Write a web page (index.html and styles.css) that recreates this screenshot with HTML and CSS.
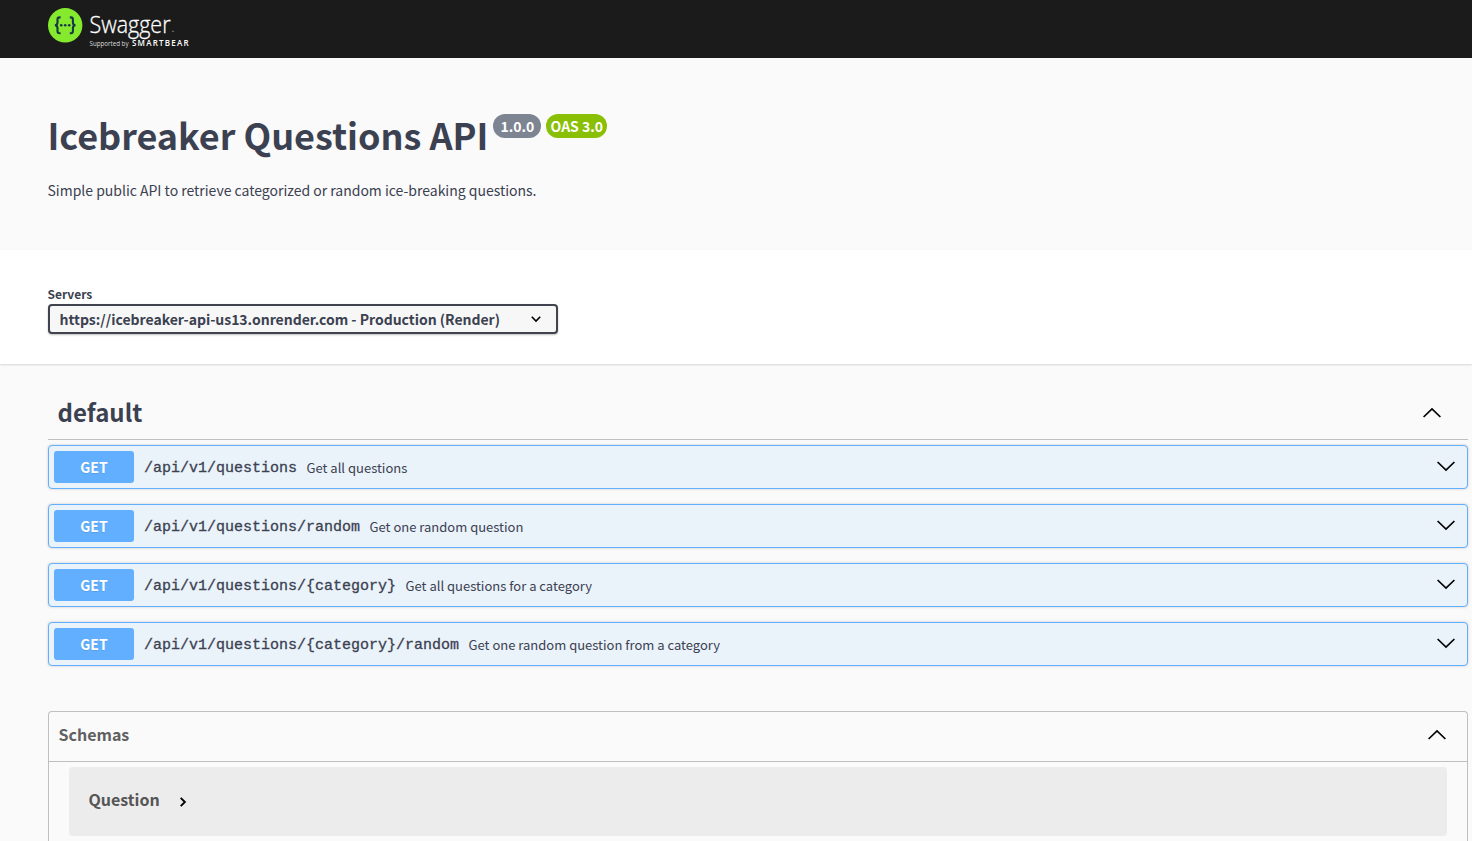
FILE: index.html
```html
<!DOCTYPE html>
<html lang="en">
<head>
<meta charset="utf-8">
<title>Icebreaker Questions API</title>
<link rel="stylesheet" href="styles.css">
</head>
<body>
<header class="topbar">
  <svg class="logo" width="144" height="42" viewBox="0 0 144 42">
    <circle cx="17.2" cy="17.3" r="17.2" fill="#85ea2d"/>
    <g fill="none" stroke="#173647" stroke-width="2.1">
      <path d="M12.6 9.4h-1.1q-2 0-2 2v3.2q0 2.6-2.6 2.7q2.6.1 2.6 2.7v3.2q0 2 2 2h1.1"/>
      <path d="M21.8 9.4h1.1q2 0 2 2v3.2q0 2.6 2.6 2.7q-2.6.1-2.6 2.7v3.2q0 2-2 2h-1.1"/>
    </g>
    <g fill="#173647"><circle cx="13.2" cy="17.3" r="1.3"/><circle cx="17.2" cy="17.3" r="1.3"/><circle cx="21.2" cy="17.3" r="1.3"/></g>
    <text class="logo-name" x="41.5" y="24.5" textLength="81" lengthAdjust="spacingAndGlyphs">Swagger</text>
    <path d="M123.8 23.3h2.4" stroke="#888" stroke-width=".8"/>
    <text class="logo-small" x="41.5" y="38" textLength="39" lengthAdjust="spacingAndGlyphs">Supported by</text>
    <text class="logo-brand" x="84" y="38" textLength="56.5" lengthAdjust="spacing">SMARTBEAR</text>
  </svg>
</header>
<section class="info">
  <h1 class="title">Icebreaker Questions API<span class="badges"><span class="badge version">1.0.0</span><span class="badge oas">OAS 3.0</span></span></h1>
  <p class="description">Simple public API to retrieve categorized or random ice-breaking questions.</p>
</section>
<section class="servers">
  <div class="servers-label">Servers</div>
  <div class="select"><span>https://icebreaker-api-us13.onrender.com - Production (Render)</span>
    <svg width="12" height="8" viewBox="0 0 12 8"><path d="M1.8 1.8L6 6l4.2-4.2" fill="none" stroke="#000" stroke-width="1.6"/></svg>
  </div>
</section>
<main class="content">
  <h2 class="tag"><span>default</span><svg class="arrow" width="20" height="12" viewBox="0 0 20 12"><path d="M1.6 10L10 2l8.4 8"/></svg></h2>
  <div class="operations">
    <div class="op"><span class="method">GET</span><span class="path">/api/v1/questions</span><span class="summary">Get all questions</span><svg class="arrow" width="20" height="12" viewBox="0 0 20 12"><path d="M1.6 2L10 10l8.4-8"/></svg></div>
    <div class="op"><span class="method">GET</span><span class="path">/api/v1/questions/random</span><span class="summary">Get one random question</span><svg class="arrow" width="20" height="12" viewBox="0 0 20 12"><path d="M1.6 2L10 10l8.4-8"/></svg></div>
    <div class="op"><span class="method">GET</span><span class="path">/api/v1/questions/{category}</span><span class="summary">Get all questions for a category</span><svg class="arrow" width="20" height="12" viewBox="0 0 20 12"><path d="M1.6 2L10 10l8.4-8"/></svg></div>
    <div class="op"><span class="method">GET</span><span class="path">/api/v1/questions/{category}/random</span><span class="summary">Get one random question from a category</span><svg class="arrow" width="20" height="12" viewBox="0 0 20 12"><path d="M1.6 2L10 10l8.4-8"/></svg></div>
  </div>
  <section class="models">
    <h3 class="models-head"><span>Schemas</span><svg class="arrow" width="20" height="12" viewBox="0 0 20 12"><path d="M1.6 10L10 2l8.4 8"/></svg></h3>
    <div class="model"><span>Question</span><svg width="8" height="12" viewBox="0 0 8 12"><path d="M1.7 1.8L5.9 6l-4.2 4.2" fill="none" stroke="#000" stroke-width="1.9"/></svg></div>
  </section>
</main>
</body>
</html>
```

FILE: styles.css
```css
* { box-sizing: border-box; }
body {
  margin: 0;
  background: #fafafa;
  color: #3b4151;
  font-family: "Noto Sans CJK KR", "Noto Sans", sans-serif;
}
h1, h2, h3, p { margin: 0; }
svg { flex: none; display: block; }
.topbar { height: 58px; padding: 8px 48px; background: #1b1b1b; }
.logo-name { font: 300 23px "Open Sans", sans-serif; fill: #fff; stroke: #fff; stroke-width: .3; }
.logo-small { font: 400 6.4px "Open Sans", sans-serif; fill: #ddd; }
.logo-brand { font: 600 8px "Open Sans", sans-serif; fill: #fff; }
.info { height: 192px; padding: 50px 47.5px 0; }
.title { display: flex; font-size: 36px; line-height: 52px; font-weight: 700; letter-spacing: -.03px; white-space: nowrap; }
.badges { display: flex; gap: 5px; margin: 6px 0 0 5px; letter-spacing: 0; }
.badge { height: 24px; line-height: 25px; border-radius: 12px; color: #fff; font-size: 14px; text-align: center; }
.version { width: 48px; background: #7d8492; }
.oas { width: 61px; background: #89bf04; }
.description { margin-top: 20px; font-size: 14px; line-height: 20px; letter-spacing: -.01px; }
.servers { height: 114px; padding: 35px 48px 0; background: #fff; box-shadow: 0 1px 2px rgba(0,0,0,.15); }
.servers-label { margin: 0 0 2px -.5px; font-size: 12px; line-height: 17px; font-weight: 700; }
.select {
  display: flex;
  align-items: center;
  justify-content: space-between;
  width: 510px;
  height: 30px;
  padding: 0 14px 0 9.5px;
  border: 2px solid #41444e;
  border-radius: 4px;
  background: #f7f7f7;
  box-shadow: 0 1px 2px rgba(0,0,0,.25);
  font-size: 14px;
  line-height: 26px;
  font-weight: 700;
  letter-spacing: -.015px;
  white-space: nowrap;
}
.content { padding: 22px 4px 0 48px; }
.tag { display: flex; align-items: center; justify-content: space-between; height: 54px; padding: 0 26px 0 9.5px; border-bottom: 1px solid #bebfc3; font-size: 24px; line-height: 36px; }
.tag span { padding-bottom: 2px; }
.arrow path { fill: none; stroke: #000; stroke-width: 1.7; }
.operations { display: grid; gap: 15px; padding-top: 5px; }
.op { display: flex; align-items: center; height: 44px; padding: 0 11px 0 5px; border: 1px solid #61affe; border-radius: 4px; background: #eaf2fa; box-shadow: 0 0 3px rgba(0,0,0,.19); }
.op .arrow { margin: 0 0 2px auto; }
.method { width: 80px; height: 32px; border-radius: 3px; background: #61affe; color: #fff; font-size: 14px; line-height: 33px; font-weight: 700; text-align: center; text-shadow: 0 1px 0 rgba(0,0,0,.1); }
.path { margin-left: 10px; padding-top: 4px; font: 400 15px/20px "Liberation Mono", monospace; -webkit-text-stroke: .3px #3b4151; }
.summary { margin-left: 9.5px; padding-top: 1px; font-size: 13px; line-height: 20px; }
.models { margin-top: 45px; padding-bottom: 5px; border: 1px solid #bebfc3; border-bottom: 0; border-radius: 4px 4px 0 0; }
.models-head { display: flex; align-items: center; justify-content: space-between; height: 50px; padding: 0 20px 4px 9.5px; border-bottom: 1px solid #bebfc3; color: #606060; font-size: 16px; line-height: 24px; }
.models-head span, .model span { padding-bottom: 2px; }
.model { display: flex; align-items: center; gap: 20px; height: 69px; margin: 5px 20px 0; padding: 0 19.5px 3px; border-radius: 4px; background: #ececec; color: #555; font-size: 16px; line-height: 24px; font-weight: 700; }
.model svg { margin: 4px 0 0 -.5px; }
```
